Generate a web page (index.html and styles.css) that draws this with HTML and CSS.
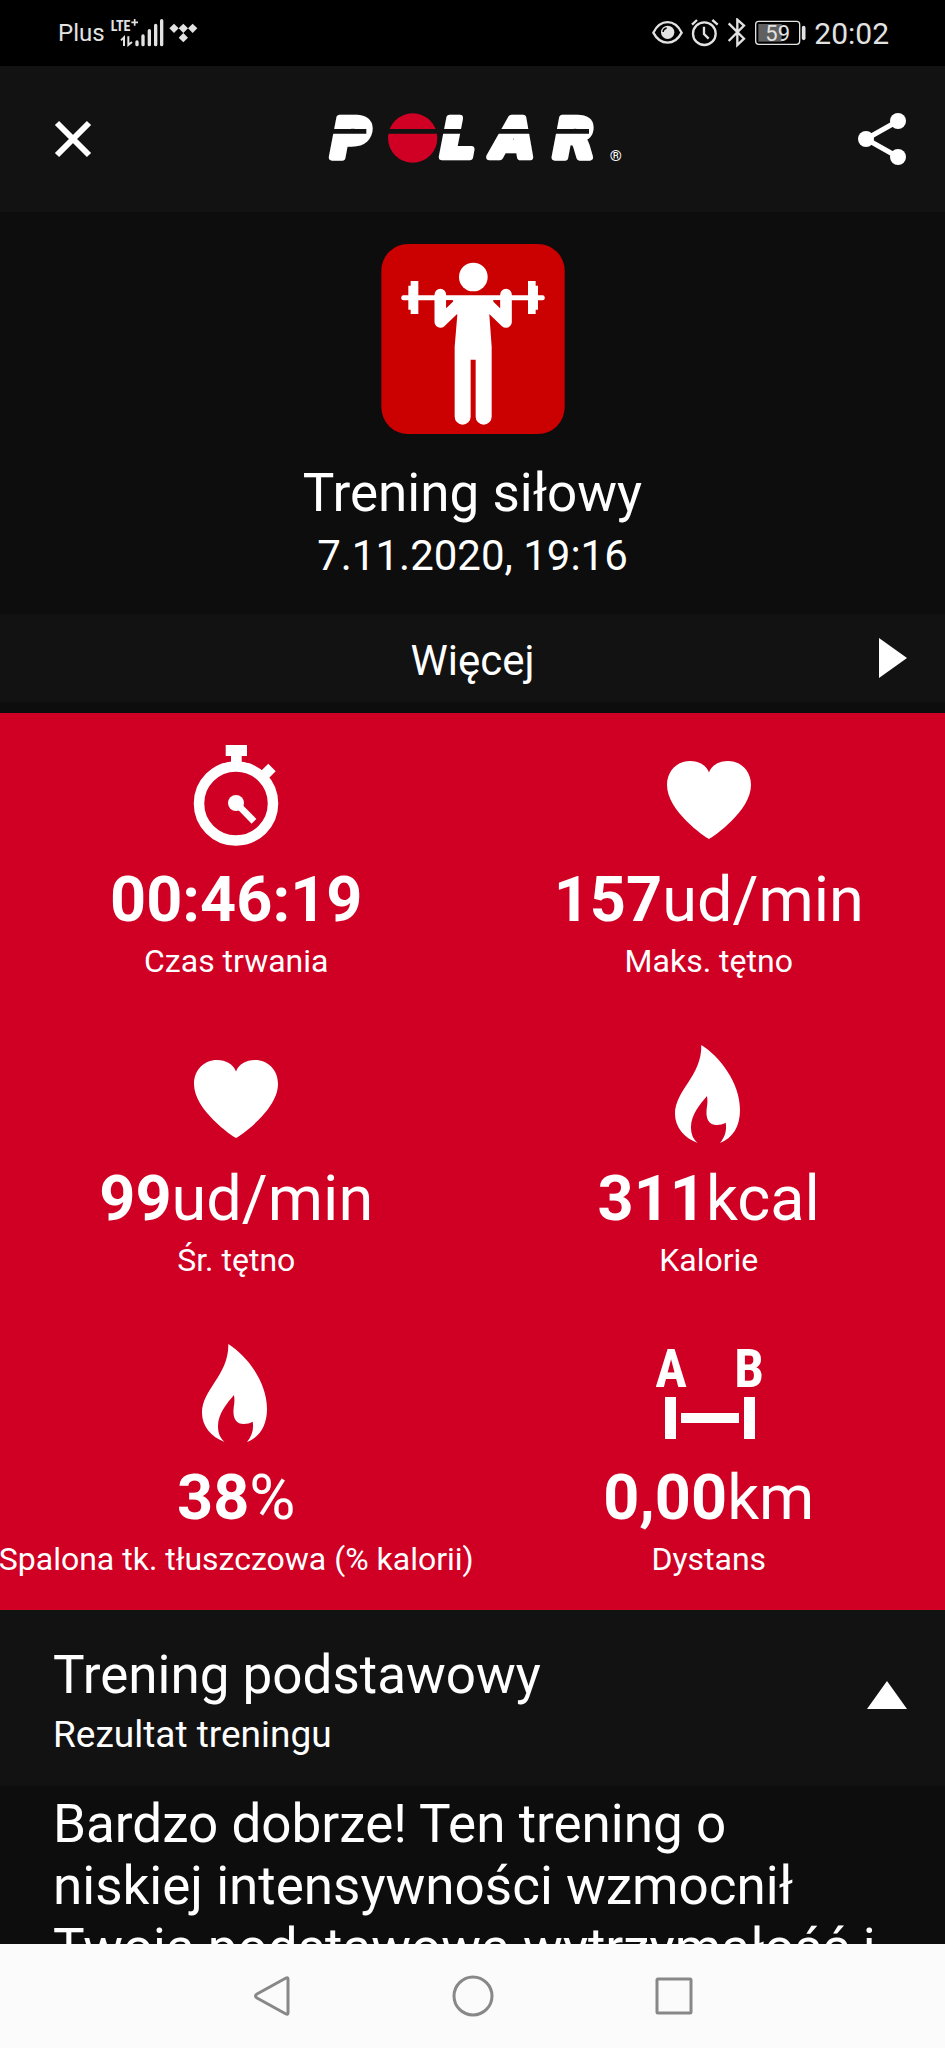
FILE: index.html
```html
<!DOCTYPE html>
<html lang="pl">
<head>
<meta charset="utf-8">
<meta name="viewport" content="width=device-width, initial-scale=1">
<title>Trening siłowy</title>
<link rel="stylesheet" href="styles.css">
</head>
<body>
<svg class="defs" aria-hidden="true">
  <symbol id="heart" viewBox="0 0 100 100"><path d="M50 94C46 92 8 66 8 40C8 26 18 16 31 16C40 16 47 20 50 27.500C53 20 60 16 69 16C82 16 92 26 92 40C92 66 54 92 50 94Z"/></symbol>
  <symbol id="flame" viewBox="0 0 100 100"><path d="M42.300 1C60 12 81 38 81 66C81 82 74 94 61 99C66 93 68 86 66.700 78.700C64 80 61 81 57.700 81C50 81 47 75 47.500 67C48 61 49 59 48 52C41 60 32 71 32 83C32 90 34 95 38.700 99C25 94 16 83 16 70C16 46 43 32 42.300 1Z"/></symbol>
</svg>

<div class="status">
  <div class="status-left">
    <span class="carrier">Plus</span>
    <svg class="signal" viewBox="200 54 168 90" role="img" aria-label="LTE+">
      <text class="lte" x="205" y="94">LTE</text>
      <path d="M267 67h20M277 57v20" fill="none" stroke="currentColor" stroke-width="5"/>
      <path d="M236 121l9-9v26M258 109v26l11-9" fill="none" stroke="currentColor" stroke-width="6"/>
      <path d="M284 126v8M302 108v26M321 92v42M340 76v58M358 62v72" fill="none" stroke="currentColor" stroke-width="10" stroke-linecap="round"/>
    </svg>
    <svg class="tidal" viewBox="391 54 87 90" aria-hidden="true"><path d="M406 71l14 14-14 14-14-14zM434 71l14 14-14 14-14-14zM462 71l14 14-14 14-14-14zM434 99l14 14-14 14-14-14z" fill="currentColor"/></svg>
  </div>
  <div class="status-right">
    <svg class="eye" viewBox="57 54 93 90" aria-hidden="true"><path d="M61 98C82 56 125 56 146 98C125 138 82 138 61 98Z" fill="none" stroke="currentColor" stroke-width="7"/><circle cx="104" cy="97" r="20" fill="currentColor"/><path d="M90 96q1-10 11-12" fill="none" stroke="#000" stroke-width="4"/></svg>
    <svg class="alarm" viewBox="177 54 84 90" aria-hidden="true"><g fill="none" stroke="currentColor" stroke-width="7"><circle cx="217" cy="101" r="34"/><path d="M216 80v22l14 14M180 74l15-14M257 74l-16-14"/></g></svg>
    <svg class="bt" viewBox="285 54 57 90" aria-hidden="true"><path d="M290 70l46 46-20 19V59l20 18-46 46" fill="none" stroke="currentColor" stroke-width="7"/></svg>
    <svg class="battery" viewBox="375 54 156 90" role="img" aria-label="Bateria 59%"><rect x="380" y="64" width="132" height="69" rx="9" fill="none" stroke="currentColor" stroke-width="4"/><rect x="388" y="72" width="70" height="53" fill="#606060"/><path d="M524 83v32" stroke="currentColor" stroke-width="11" stroke-linecap="round"/><text class="charge" x="446" y="122">59</text></svg>
    <time class="clock">20:02</time>
  </div>
</div>

<header class="header">
  <button class="icon-button" aria-label="Zamknij"><svg class="close" viewBox="0 0 38 38"><path d="M3 3l32 32M35 3L3 35" fill="none" stroke="currentColor" stroke-width="6"/></svg></button>
  <svg class="logo" viewBox="-7 0 990 240" role="img" aria-label="Polar">
    <g class="wordmark"><text x="62" y="175">P</text><text x="392" y="175">L</text><text x="548" y="175">A</text><text x="730" y="175">R</text></g>
    <circle cx="307" cy="117" r="74" fill="#d00024"/>
    <path d="M60 97H168M226 97H504M550 97H836" stroke="#121212" stroke-width="14" fill="none"/>
    <text class="registered" x="916" y="186">®</text>
  </svg>
  <button class="icon-button share-button" aria-label="Udostępnij"><svg class="share" viewBox="0 0 50 54"><path d="M41 9L9 27l32 18" fill="none" stroke="currentColor" stroke-width="5"/><g fill="currentColor"><circle cx="41" cy="9" r="8"/><circle cx="9" cy="27" r="8"/><circle cx="41" cy="45" r="8"/></g></svg></button>
</header>

<main class="content">
  <section class="hero">
    <svg class="sport" viewBox="62 42 550 570" aria-hidden="true">
      <rect x="62" y="42" width="550" height="570" rx="80" fill="#cb0000"/>
      <g fill="#fff">
        <circle cx="338" cy="141" r="43"/>
        <rect x="122" y="196" width="430" height="15" rx="6"/>
        <path d="M150 153h23v99h-23v-13h-7v-72h7zM502 153h23v14h7v72h-7v13h-23z"/>
        <path d="M275 207H400L386 254L393 350V560A24 24 0 0 1 345 560V389H330V560A24 24 0 0 1 282 560V350L290 254Z"/>
      </g>
      <path d="M239 194V276L292 225M436 194V276L383 225" fill="none" stroke="#fff" stroke-width="35" stroke-linecap="round" stroke-linejoin="round"/>
      <path d="M257 211H278L257 232ZM397 211H418V232Z" fill="#cb0000"/>
    </svg>
    <h1 class="title">Trening siłowy</h1>
    <p class="date">7.11.2020, 19:16</p>
  </section>

  <button class="more"><span class="more-text">Więcej</span><svg class="more-arrow" viewBox="0 0 28 40" aria-hidden="true"><path d="M0 0L28 20L0 40Z" fill="currentColor"/></svg></button>

  <section class="stats">
    <div class="stat">
      <svg class="stat-icon" viewBox="0 0 100 100" aria-hidden="true"><circle cx="50" cy="58.500" r="37" fill="none" stroke="currentColor" stroke-width="10.500"/><path d="M39.700 0H61V11H55.700V20H45V11H39.700ZM82.300 18.700L89.700 26.300L82 34L74.700 26.300Z"/><circle cx="50" cy="58" r="8"/><path d="M50 58L68 76.300" stroke="currentColor" stroke-width="6.700"/></svg>
      <p class="value"><b>00:46:19</b></p><p class="label">Czas trwania</p>
    </div>
    <div class="stat">
      <svg class="stat-icon" aria-hidden="true"><use href="#heart"/></svg>
      <p class="value"><b>157</b>ud/min</p><p class="label">Maks. tętno</p>
    </div>
    <div class="stat">
      <svg class="stat-icon" aria-hidden="true"><use href="#heart"/></svg>
      <p class="value"><b>99</b>ud/min</p><p class="label">Śr. tętno</p>
    </div>
    <div class="stat">
      <svg class="stat-icon" aria-hidden="true"><use href="#flame"/></svg>
      <p class="value"><b>311</b>kcal</p><p class="label">Kalorie</p>
    </div>
    <div class="stat">
      <svg class="stat-icon" aria-hidden="true"><use href="#flame"/></svg>
      <p class="value"><b>38</b>%</p><p class="label">Spalona tk. tłuszczowa (% kalorii)</p>
    </div>
    <div class="stat">
      <svg class="stat-icon" viewBox="0 0 100 100" aria-hidden="true"><text class="ab" x="12" y="44">A</text><text class="ab" x="90" y="44">B</text><path d="M6 54H17V96H6ZM85 54H96V96H85ZM22 70H80V80H22Z"/></svg>
      <p class="value"><b>0,00</b>km</p><p class="label">Dystans</p>
    </div>
  </section>

  <section class="result">
    <button class="result-head" aria-expanded="true">
      <span class="result-titles"><span class="result-title">Trening podstawowy</span><span class="result-sub">Rezultat treningu</span></span>
      <svg class="collapse" viewBox="0 0 40 28" aria-hidden="true"><path d="M20 0L40 28H0Z" fill="currentColor"/></svg>
    </button>
    <p class="result-text">Bardzo dobrze! Ten trening o niskiej intensywności wzmocnił Twoją podstawową wytrzymałość i</p>
  </section>
</main>

<nav class="navbar">
  <button class="nav-button" aria-label="Wstecz"><svg class="nav-icon" viewBox="0 0 42 42"><path d="M37 4V38Q37 40 35 39L6 23Q3 21 6 19L35 3Q37 2 37 4Z"/></svg></button>
  <button class="nav-button" aria-label="Ekran główny"><svg class="nav-icon" viewBox="0 0 42 42"><circle cx="21" cy="21" r="19"/></svg></button>
  <button class="nav-button" aria-label="Ostatnie aplikacje"><svg class="nav-icon" viewBox="0 0 42 42"><rect x="4" y="4" width="34" height="34" rx="1"/></svg></button>
</nav>
</body>
</html>
```
FILE: styles.css
```css
* { box-sizing: border-box; }

body {
  margin: 0;
  height: 100vh;
  display: flex;
  flex-direction: column;
  background: #0d0d0d;
  color: #fff;
  font-family: Roboto, "Noto Sans", sans-serif;
}

h1, p { margin: 0; font-weight: 400; }

button {
  margin: 0;
  padding: 0;
  border: 0;
  background: none;
  color: inherit;
  font: inherit;
  cursor: pointer;
}

svg { display: block; flex: none; }
.defs { position: absolute; width: 0; height: 0; }

/* Status bar */
.status {
  flex: none;
  display: flex;
  justify-content: space-between;
  height: 66px;
  padding: 0 56px 0 58px;
  background: #000;
  color: #e2e2e2;
}
.status-left, .status-right { display: flex; align-items: center; }
.status-left { gap: 4px; }
.status-right { gap: 8px; }
.carrier { font-size: 24px; }
.clock { font-size: 30px; }
.signal { width: 56px; height: 30px; overflow: visible; }
.tidal { width: 29px; height: 30px; }
.eye { width: 31px; height: 30px; }
.alarm { width: 28px; height: 30px; }
.bt { width: 19px; height: 30px; }
.battery { width: 52px; height: 30px; }
.lte { font-family: "Roboto Condensed", "Liberation Sans Narrow", Roboto, sans-serif; font-size: 42px; font-weight: 700; fill: currentColor; }
.charge { font-size: 66px; text-anchor: middle; fill: currentColor; }

/* App header */
.header {
  flex: none;
  display: grid;
  grid-template-columns: 1fr auto 1fr;
  align-items: center;
  height: 146px;
  padding: 0 38px;
  background: #121212;
}
.icon-button { justify-self: start; padding-left: 16px; }
.share-button { justify-self: end; }
.close { width: 38px; height: 38px; }
.share { width: 50px; height: 54px; }
.logo { width: 330px; height: 80px; }
.wordmark {
  font-family: "DejaVu Sans", sans-serif;
  font-size: 160px;
  font-weight: 700;
  font-style: italic;
  fill: #fff;
  stroke: #fff;
  stroke-width: 20px;
  stroke-linejoin: round;
}
.registered { font-size: 46px; text-anchor: middle; fill: #fff; }

.content {
  flex: 1;
  min-height: 0;
  overflow-y: auto;
  scrollbar-width: none;
}

/* Session summary */
.hero {
  display: flex;
  flex-direction: column;
  align-items: center;
  padding: 32px 24px 33px;
}
.sport { width: 184px; height: 190px; margin-bottom: 28px; }
.title { font-size: 53px; line-height: 62px; margin-bottom: 7px; }
.date { font-size: 42px; line-height: 50px; }

.more {
  display: grid;
  grid-template-columns: 1fr auto 1fr;
  align-items: center;
  width: 100%;
  height: 88px;
  padding: 0 38px;
  margin-bottom: 11px;
  background: #121212;
}
.more-text { grid-column: 2; padding-top: 6px; font-size: 42px; line-height: 50px; }
.more-arrow { justify-self: end; width: 28px; height: 40px; }

/* Metrics */
.stats {
  display: grid;
  grid-template-columns: repeat(2, minmax(0, 1fr));
  background: #d00024;
}
.stat {
  display: flex;
  flex-direction: column;
  align-items: center;
  padding: 32px 0;
  white-space: nowrap;
}
.stat-icon { width: 100px; height: 100px; margin-bottom: 18px; fill: currentColor; overflow: visible; }
.value { font-size: 63px; line-height: 74px; margin-bottom: 5px; }
.value b { font-weight: 700; }
.label { font-size: 32px; line-height: 38px; }
.ab { font-family: "Roboto Condensed", "Liberation Sans Narrow", Roboto, sans-serif; font-size: 53px; font-weight: 700; text-anchor: middle; }

/* Training result */
.result-head {
  display: flex;
  align-items: center;
  justify-content: space-between;
  width: 100%;
  padding: 34px 38px 30px 53px;
  background: #121212;
  text-align: left;
}
.result-titles { display: flex; flex-direction: column; gap: 8px; }
.result-title { font-size: 53px; line-height: 62px; }
.result-sub { font-size: 37px; line-height: 42px; }
.collapse { width: 40px; height: 28px; margin-bottom: 10px; }
.result-text { padding: 7px 66px 0 53px; font-size: 53px; line-height: 62px; }

/* System navigation */
.navbar {
  flex: none;
  display: flex;
  justify-content: center;
  height: 104px;
  background: #fbfbfb;
  color: #888;
}
.nav-button { display: grid; place-items: center; width: 201px; }
.nav-icon { width: 42px; height: 42px; fill: none; stroke: currentColor; stroke-width: 3px; }
```
